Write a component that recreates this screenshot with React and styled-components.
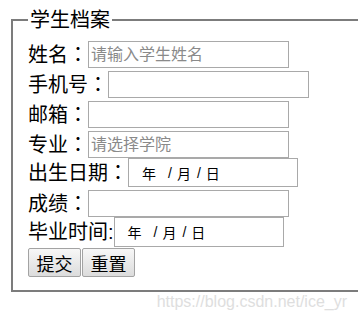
import styled, { createGlobalStyle } from 'styled-components';

const GlobalStyle = createGlobalStyle`
  html, body {
    margin: 0;
    padding: 0;
    background: #ffffff;
    overflow: hidden;
  }
  body {
    font-family: "Liberation Sans", "Noto Sans CJK SC", sans-serif;
  }
`;

const rows = [
    { label: '姓名', colon: '：', type: 'text', placeholder: '请输入学生姓名', top: 9 },
    { label: '手机号', colon: '：', type: 'text', top: 3 },
    { label: '邮箱', colon: '：', type: 'text', top: 3 },
    { label: '专业', colon: '：', type: 'text', placeholder: '请选择学院', top: 3 },
    { label: '出生日期', colon: '：', type: 'date', top: 0, h: 29 },
    { label: '成绩', colon: '：', type: 'text', top: 3 },
    { label: '毕业时间', colon: ':', type: 'date', top: 0, h: 30 },
];

const App = () => {
    return (
        <Page>
            <GlobalStyle />
            <Fieldset>
                <Legend>学生档案</Legend>
                <Form>
                    {rows.map((row) => (
                        <Row key={row.label} $top={row.top}>
                            <Label>
                                {row.label}
                                {row.colon === '：' ? <WideColon>：</WideColon> : row.colon}
                            </Label>
                            {row.type === 'date' ? (
                                <DateBox $h={row.h}>
                                    <DatePart $gap={12}>年</DatePart>
                                    <DatePart $gap={5}>/</DatePart>
                                    <DatePart $gap={6}>月</DatePart>
                                    <DatePart $gap={5}>/</DatePart>
                                    <DatePart>日</DatePart>
                                </DateBox>
                            ) : (
                                <TextInput type="text" placeholder={row.placeholder || ''} />
                            )}
                        </Row>
                    ))}
                    <ButtonRow>
                        <Button type="button">提交</Button>
                        <Button type="button">重置</Button>
                    </ButtonRow>
                </Form>
            </Fieldset>
            <Watermark>https://blog.csdn.net/ice_yr</Watermark>
        </Page>
    );
};

export default App;

const Page = styled.div`
    padding: 8px 0 0 11px;
`;

const Fieldset = styled.fieldset`
    margin: 0;
    border: 2px solid #7c7c7c;
    border-right: none;
    padding: 0 0 13px 15px;
    min-width: 0;
`;

const Legend = styled.legend`
    font-size: 20px;
    line-height: 24px;
    padding: 0 2px;
    color: #000;
`;

const Form = styled.div`
    display: flex;
    flex-direction: column;
`;

const Row = styled.div`
    display: flex;
    align-items: center;
    margin-top: ${(props) => props.$top}px;
`;

const Label = styled.span`
    font-size: 20px;
    line-height: 24px;
    color: #000;
    white-space: nowrap;
`;

// 전각 콜론은 가운데 정렬되는 TC 글꼴로
const WideColon = styled.span`
    font-family: "Noto Sans CJK TC", "Noto Sans CJK JP", sans-serif;
`;

const TextInput = styled.input`
    box-sizing: border-box;
    width: 201px;
    height: 27px;
    margin: 0;
    padding: 0 2px;
    border: 1px solid #a9a9a9;
    font-family: "Liberation Sans", "Noto Sans CJK SC", sans-serif;
    font-size: 16px;
    outline: none;
    &::placeholder {
        color: #8a8a8a;
    }
`;

const DateBox = styled.div`
    box-sizing: border-box;
    width: 170px;
    height: ${(props) => props.$h}px;
    border: 1px solid #a9a9a9;
    padding-left: 13px;
    display: flex;
    align-items: center;
    font-size: 14px;
    color: #000;
`;

const DatePart = styled.span`
    margin-right: ${(props) => props.$gap || 0}px;
`;

const ButtonRow = styled.div`
    display: flex;
    gap: 1px;
    margin-top: 1px;
`;

const Button = styled.button`
    box-sizing: border-box;
    height: 29px;
    width: 53px;
    margin: 0;
    padding: 0;
    border: 1px solid #a3a3a3;
    border-radius: 2px;
    background: linear-gradient(#f7f7f7, #dcdcdc);
    font-family: "Liberation Sans", "Noto Sans CJK SC", sans-serif;
    font-size: 18px;
    color: #000;
`;

const Watermark = styled.div`
    text-align: right;
    padding-right: 11px;
    font-family: "Liberation Sans", Arial, sans-serif;
    font-size: 16px;
    line-height: 19px;
    color: #dedede;
`;
